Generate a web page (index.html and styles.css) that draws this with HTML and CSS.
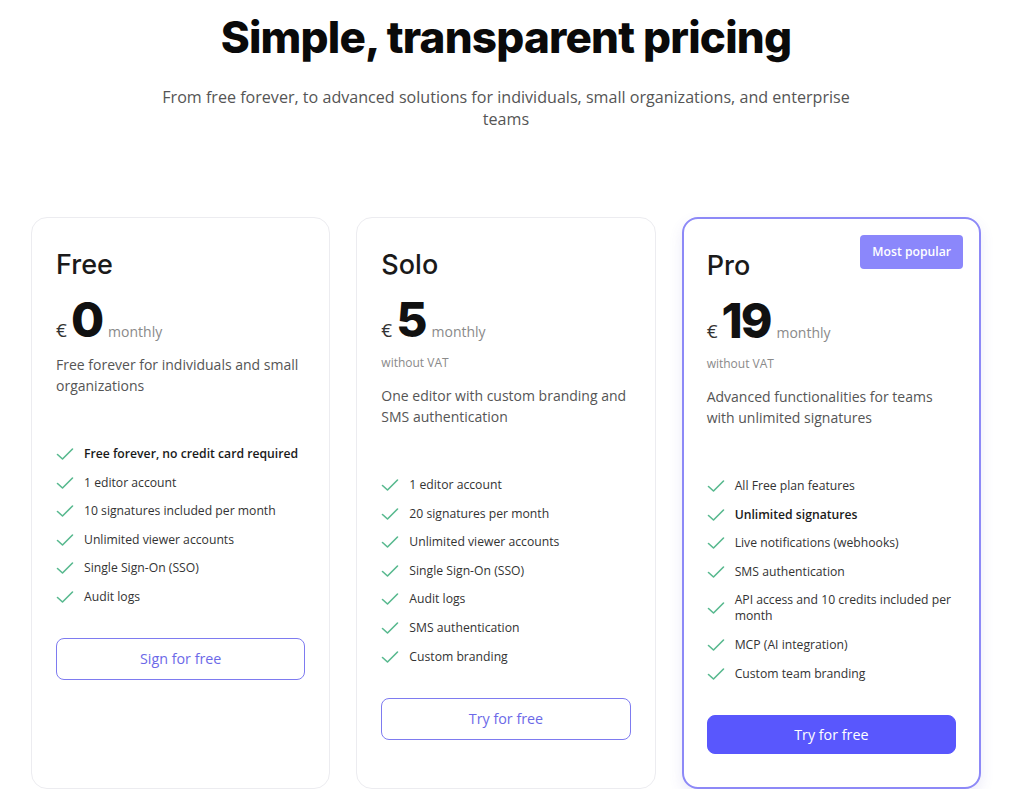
FILE: index.html
```html
<!DOCTYPE html>
<html>
<head>
    <title>Pricing</title>
    <meta charset="utf-8">
    <meta name="viewport" content="width=device-width, initial-scale=1">
    <link rel="stylesheet" href="styles.css">
</head>
<body>
    <div class="page">
        <h1>Simple, transparent pricing</h1>
        <p class="lead">From free forever, to advanced solutions for individuals, small organizations, and enterprise teams</p>

        <div class="plans">
            <div class="plan">
                <h2>Free</h2>
                <div class="price"><span class="cur">€</span><span class="amount">0</span><span class="per">monthly</span></div>
                <p class="desc">Free forever for individuals and small organizations</p>
                <ul class="features">
                    <li><svg class="check" viewBox="0 0 18 14"><path d="M1.5 7.5l5 4.5 10-10"/></svg><span class="strong">Free forever, no credit card required</span></li>
                    <li><svg class="check" viewBox="0 0 18 14"><path d="M1.5 7.5l5 4.5 10-10"/></svg><span>1 editor account</span></li>
                    <li><svg class="check" viewBox="0 0 18 14"><path d="M1.5 7.5l5 4.5 10-10"/></svg><span>10 signatures included per month</span></li>
                    <li><svg class="check" viewBox="0 0 18 14"><path d="M1.5 7.5l5 4.5 10-10"/></svg><span>Unlimited viewer accounts</span></li>
                    <li><svg class="check" viewBox="0 0 18 14"><path d="M1.5 7.5l5 4.5 10-10"/></svg><span>Single Sign-On (SSO)</span></li>
                    <li><svg class="check" viewBox="0 0 18 14"><path d="M1.5 7.5l5 4.5 10-10"/></svg><span>Audit logs</span></li>
                </ul>
                <button class="btn">Sign for free</button>
            </div>

            <div class="plan">
                <h2>Solo</h2>
                <div class="price"><span class="cur">€</span><span class="amount">5</span><span class="per">monthly</span></div>
                <div class="vat">without VAT</div>
                <p class="desc">One editor with custom branding and SMS authentication</p>
                <ul class="features">
                    <li><svg class="check" viewBox="0 0 18 14"><path d="M1.5 7.5l5 4.5 10-10"/></svg><span>1 editor account</span></li>
                    <li><svg class="check" viewBox="0 0 18 14"><path d="M1.5 7.5l5 4.5 10-10"/></svg><span>20 signatures per month</span></li>
                    <li><svg class="check" viewBox="0 0 18 14"><path d="M1.5 7.5l5 4.5 10-10"/></svg><span>Unlimited viewer accounts</span></li>
                    <li><svg class="check" viewBox="0 0 18 14"><path d="M1.5 7.5l5 4.5 10-10"/></svg><span>Single Sign-On (SSO)</span></li>
                    <li><svg class="check" viewBox="0 0 18 14"><path d="M1.5 7.5l5 4.5 10-10"/></svg><span>Audit logs</span></li>
                    <li><svg class="check" viewBox="0 0 18 14"><path d="M1.5 7.5l5 4.5 10-10"/></svg><span>SMS authentication</span></li>
                    <li><svg class="check" viewBox="0 0 18 14"><path d="M1.5 7.5l5 4.5 10-10"/></svg><span>Custom branding</span></li>
                </ul>
                <button class="btn">Try for free</button>
            </div>

            <div class="plan plan-pro">
                <span class="badge">Most popular</span>
                <h2>Pro</h2>
                <div class="price"><span class="cur">€</span><span class="amount">19</span><span class="per">monthly</span></div>
                <div class="vat">without VAT</div>
                <p class="desc">Advanced functionalities for teams with unlimited signatures</p>
                <ul class="features">
                    <li><svg class="check" viewBox="0 0 18 14"><path d="M1.5 7.5l5 4.5 10-10"/></svg><span>All Free plan features</span></li>
                    <li><svg class="check" viewBox="0 0 18 14"><path d="M1.5 7.5l5 4.5 10-10"/></svg><span class="strong">Unlimited signatures</span></li>
                    <li><svg class="check" viewBox="0 0 18 14"><path d="M1.5 7.5l5 4.5 10-10"/></svg><span>Live notifications (webhooks)</span></li>
                    <li><svg class="check" viewBox="0 0 18 14"><path d="M1.5 7.5l5 4.5 10-10"/></svg><span>SMS authentication</span></li>
                    <li><svg class="check" viewBox="0 0 18 14"><path d="M1.5 7.5l5 4.5 10-10"/></svg><span>API access and 10 credits included per month</span></li>
                    <li><svg class="check" viewBox="0 0 18 14"><path d="M1.5 7.5l5 4.5 10-10"/></svg><span>MCP (AI integration)</span></li>
                    <li><svg class="check" viewBox="0 0 18 14"><path d="M1.5 7.5l5 4.5 10-10"/></svg><span>Custom team branding</span></li>
                </ul>
                <button class="btn btn-solid">Try for free</button>
            </div>
        </div>
    </div>
</body>
</html>
```

FILE: styles.css
```css
* { margin: 0; padding: 0; box-sizing: border-box; }
body { font-family: "Open Sans", Arial, sans-serif; background: #fff; color: #222; padding-right: 8px; }
.page { width: 950px; margin: 0 auto; }

h1 { font-family: Inter, "Liberation Sans", sans-serif; font-weight: 800; font-size: 44px; line-height: 53px; letter-spacing: -0.8px; text-align: center; color: #0a0a0a; margin-top: 11px; }
.lead { width: 700px; margin: 22px auto 0; font-size: 16.1px; line-height: 22px; color: #555; text-align: center; }

.plans { display: grid; grid-template-columns: repeat(3, 1fr); gap: 26px; margin-top: 87px; }
.plan { position: relative; display: flex; flex-direction: column; align-items: stretch; height: 572px; border: 1px solid #ececf0; border-radius: 16px; padding: 30px 24px 34px; background: #fff; }
.plan-pro { border: 2px solid #8d89f7; padding: 30px 23px 33px; box-shadow: 0 6px 14px rgba(90, 86, 200, 0.12); }

.plan h2 { font-family: Inter, "Liberation Sans", sans-serif; font-weight: 500; font-size: 27px; line-height: 34px; color: #1a1a1a; }

.price { display: flex; align-items: baseline; height: 55px; margin-top: 10px; line-height: 55px; }
.cur { font-size: 19px; color: #333; margin-right: 4px; }
.amount { font-family: Inter, "Liberation Sans", sans-serif; font-weight: 800; font-size: 48px; letter-spacing: -2px; color: #111; }
.per { font-size: 14px; color: #8a8a8a; margin-left: 6px; }

.vat { font-size: 12px; line-height: 17px; color: #8a8a8a; margin: 7px 0; }
.desc { font-size: 14px; line-height: 20.5px; color: #555; margin-top: 8px; }

.features { list-style: none; margin-top: 50px; display: flex; flex-direction: column; gap: 12.6px; }
.features li { display: flex; align-items: center; gap: 10px; font-size: 12.2px; line-height: 16px; color: #333; }
.features .strong { font-weight: 600; color: #1a1a1a; }
.check { flex: none; width: 18px; height: 14px; fill: none; stroke: #58b98f; stroke-width: 1.6; stroke-linecap: round; stroke-linejoin: round; }

.btn { margin-top: 33px; height: 42px; border: 1.5px solid #7e7bf0; border-radius: 8px; background: #fff; color: #6c69e8; font-family: "Open Sans", Arial, sans-serif; font-size: 14.3px; cursor: pointer; }
.btn-solid { background: #5957fd; border-color: #5957fd; color: #fff; }

.badge { position: absolute; top: 16px; right: 16px; background: #8b87fb; color: #fff; font-size: 12.2px; font-weight: 600; line-height: 34px; padding: 0 12px; border-radius: 4px; }
```
